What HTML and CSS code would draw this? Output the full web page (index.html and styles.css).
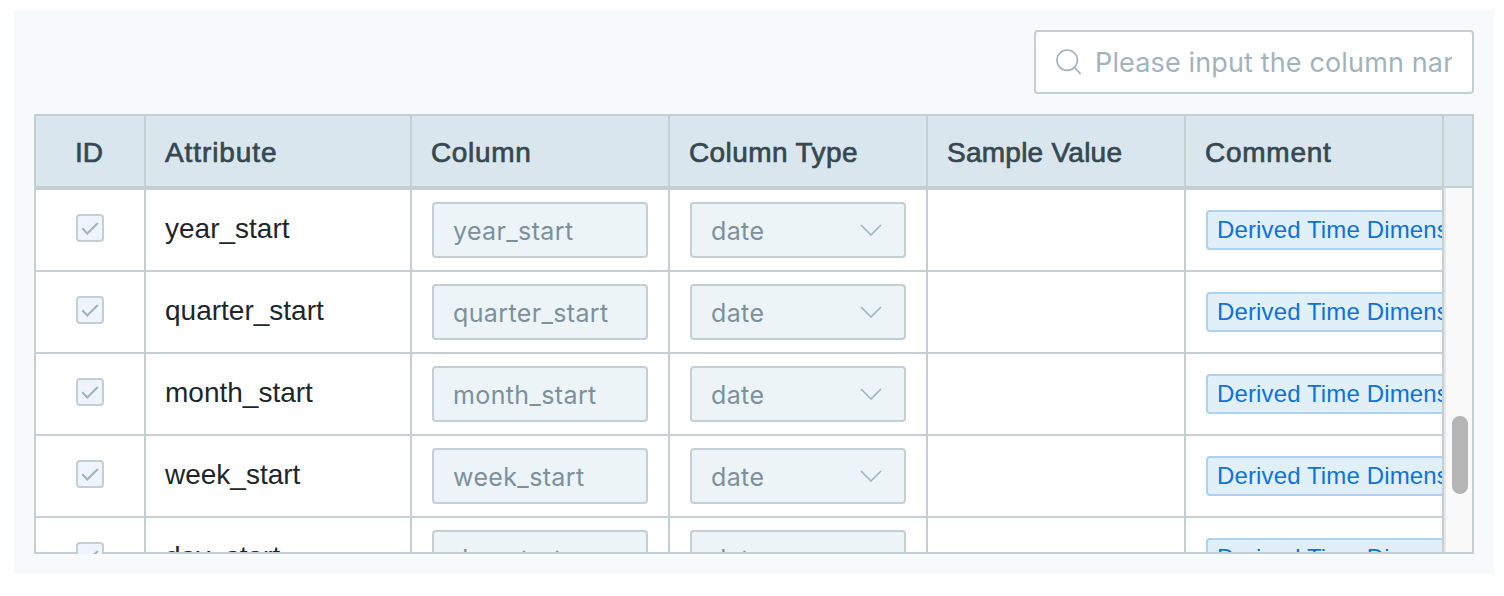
FILE: index.html
```html
<!DOCTYPE html>
<html lang="en">
<head>
<meta charset="utf-8">
<title>Columns</title>
<link rel="stylesheet" href="styles.css">
</head>
<body>
<main class="panel">
  <label class="search">
    <svg class="search-icon" viewBox="0 0 26 26"><circle cx="11.2" cy="11.2" r="10.2"/><path d="M18 18l6.6 6.8"/></svg>
    <input class="search-input" type="text" placeholder="Please input the column name">
  </label>
  <section class="table">
    <div class="grid head">
      <div class="th center"><span class="t-id">ID</span></div>
      <div class="th"><span class="t-attr">Attribute</span></div>
      <div class="th"><span class="t-col">Column</span></div>
      <div class="th"><span class="t-type">Column Type</span></div>
      <div class="th"><span class="t-sample">Sample Value</span></div>
      <div class="th"><span class="t-comment">Comment</span></div>
      <div class="th gutter"></div>
    </div>
    <div class="body">
      <div class="rows" id="rows"></div>
      <div class="scroll"><div class="thumb"></div></div>
      <div class="edge"></div>
    </div>
  </section>
</main>
<script src="rows.js"></script>
</body>
</html>
```
FILE: styles.css
```css
* { box-sizing: border-box; }
body { margin: 0; background: #fff; font-family: "Liberation Sans", Arial, sans-serif; }
.panel {
  width: 1480px; height: 564px; margin: 10px 0 0 14px; padding: 20px;
  display: flex; flex-direction: column; gap: 20px; background: #f6fafb;
}
.search {
  display: flex; align-items: center; align-self: flex-end; width: 440px; height: 64px;
  padding: 0 20px; border: 2px solid #c3cfd3; border-radius: 4px; background: #fff;
}
.search-icon { width: 26px; height: 26px; flex: none; margin-right: 13px; fill: none; stroke: #a1b3bc; stroke-width: 1.7; }
.search-input {
  flex: 1; min-width: 0; height: 40px; margin-top: 2px; padding: 0; border: 0; outline: 0; background: none;
  font: 27px/40px Inter, sans-serif; letter-spacing: 0.14px; color: #a1b3bc;
}
.search-input::placeholder { color: #a1b3bc; opacity: 1; }
.table { height: 440px; border: 2px solid #c3cfd3; border-bottom: 0; }
.grid { display: grid; grid-template-columns: 110px 266px 258px 258px 258px 258px; }
.head { grid-template-columns: 110px 266px 258px 258px 258px 258px 28px; height: 72px; background: #dae6ee; }
.th {
  display: flex; align-items: center; padding: 4px 0 0 19px; border-right: 2px solid #c3cfd3; border-bottom: 2px solid #c3cfd3;
  font-size: 28px; line-height: 32px; color: #364850; -webkit-text-stroke: 0.7px #364850; white-space: nowrap;
}
.center { justify-content: center; padding-left: 0; padding-right: 2px; }
.th.gutter { border-right: 0; }
.t-attr { letter-spacing: 0.9px; }
.t-col { letter-spacing: 0.65px; }
.t-type { letter-spacing: 0.4px; }
.t-sample { letter-spacing: 0.25px; }
.t-comment { letter-spacing: 0.75px; }
.body { position: relative; display: flex; height: 366px; overflow: hidden; }
.rows { width: 1408px; flex: none; border-top: 2px solid #c3cfd3; background: #fff; }
.row { height: 82px; }
.td { height: 82px; border-right: 2px solid #c3cfd3; border-bottom: 2px solid #c3cfd3; overflow: hidden; }
.cell-id { display: flex; justify-content: center; padding-top: 24px; overflow: visible; }
.check { position: relative; z-index: 2; width: 28px; height: 28px; border: 2px solid #c3cfd3; border-radius: 4px; background: #eef3fc; }
.check svg { display: block; width: 24px; height: 24px; fill: none; stroke: #a1b3bc; stroke-width: 2.1; }
.cell-attr { padding: 23px 0 0 19px; font-size: 28px; line-height: 32px; color: #1c262b; white-space: nowrap; }
.cell-field { padding: 12px 20px; }
.field {
  display: flex; align-items: center; justify-content: space-between; width: 216px; height: 56px; padding: 2px 22px 0 19px;
  border: 2px solid #c3cfd3; border-radius: 4px; background: #ecf4f8;
  font: 25px/32px Inter, sans-serif; letter-spacing: 0.37px; color: #7d909b; white-space: nowrap;
}
.chevron { width: 22px; height: 12px; margin-top: -3px; fill: none; stroke: #a1b3bc; stroke-width: 1.6; }
.cell-tag { padding: 20px 0 0 20px; }
.tag {
  width: 320px; height: 40px; padding-left: 9px; border: 2px solid #abd2f3; border-radius: 4px; background: #e1eff9;
  font-size: 24px; line-height: 35px; letter-spacing: 0.13px; color: #0d72da; white-space: nowrap;
}
.scroll { width: 28px; height: 364px; border-left: 2px solid #e7e7e7; background: #f9f9f9; padding: 228px 0 0 6px; }
.thumb { width: 16px; height: 78px; border-radius: 8px; background: #b5b5b5; }
.edge { position: absolute; z-index: 1; left: 0; right: 0; bottom: 0; height: 2px; background: #c3cfd3; }
```
FILE: rows.js
```js
const names = ["year_start", "quarter_start", "month_start", "week_start", "day_start"];
document.getElementById("rows").innerHTML = names.map(name => `
  <div class="grid row">
    <div class="td cell-id"><span class="check"><svg viewBox="0 0 24 24"><path d="M4.3 12.3l5 5.2L19.8 7"/></svg></span></div>
    <div class="td cell-attr"><span>${name}</span></div>
    <div class="td cell-field"><div class="field"><span>${name}</span></div></div>
    <div class="td cell-field"><div class="field"><span>date</span><svg class="chevron" viewBox="0 0 22 12"><path d="M1 1l10 10L21 1"/></svg></div></div>
    <div class="td"></div>
    <div class="td cell-tag"><div class="tag">Derived Time Dimension</div></div>
  </div>`).join("");
```
